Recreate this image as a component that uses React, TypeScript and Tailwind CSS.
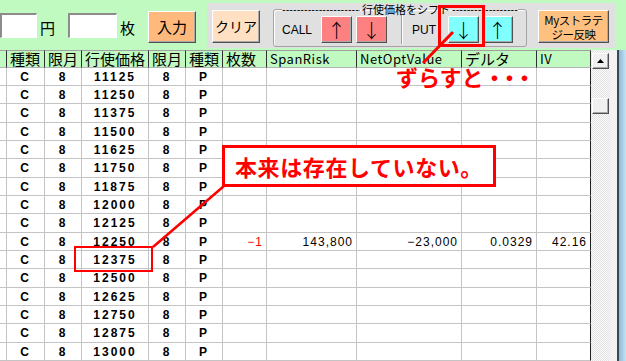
import React from "react";

const jp = "font-['Noto_Sans_CJK_JP',sans-serif]";
const lat = "font-['Liberation_Sans','Noto_Sans_CJK_JP',sans-serif]";
const raised =
  "border border-t-white border-l-white border-r-[#505050] border-b-[#505050] shadow-[inset_-1px_-1px_0_#a8a8a8]";
const sunken =
  "border-t-2 border-l-2 border-r border-b border-t-[#8c8c8c] border-l-[#8c8c8c] border-r-white border-b-white bg-white";
const cols =
  "grid grid-cols-[7px_38px_37px_67px_37px_37px_44px_90px_105px_75px_54px]";

const headers = ["", "種類", "限月", "行使価格", "限月", "種類", "枚数", "SpanRisk", "NetOptValue", "デルタ", "IV"];

const strikes = Array.from({ length: 17 }, (_, i) => 11125 + i * 125);

function ArrowBtn({ dir, color }: { dir: "up" | "down"; color: string }) {
  return (
    <div className={`flex h-[27px] w-[31px] items-center justify-center ${raised} ${color}`}>
      <span className="font-['Noto_Sans_CJK_JP',sans-serif] text-[19px] leading-none font-light">
        {dir === "up" ? "↑" : "↓"}
      </span>
    </div>
  );
}

function Row({ strike, i }: { strike: number; i: number }) {
  const h = i % 3 === 2 ? "h-[19px]" : "h-[18px]";
  const filled = strike === 12250;
  const cell = `${h} border-r border-b border-[#c4c4c4] flex items-center overflow-hidden whitespace-nowrap`;
  const bold = `${lat} text-[12px] font-bold tracking-[2px] justify-center`;
  const num = `${lat} text-[12px] tracking-[1px] justify-end pr-[3px]`;
  return (
    <div className={cols}>
      <div className={cell} />
      <div className={`${cell} ${bold}`}>C</div>
      <div className={`${cell} ${bold}`}>8</div>
      <div className={`${cell} ${bold}`}>{strike}</div>
      <div className={`${cell} ${bold}`}>8</div>
      <div className={`${cell} ${bold}`}>P</div>
      <div className={`${cell} ${num} text-[#ff0000]`}>{filled ? "−1" : ""}</div>
      <div className={`${cell} ${num}`}>{filled ? "143,800" : ""}</div>
      <div className={`${cell} ${num}`}>{filled ? "−23,000" : ""}</div>
      <div className={`${cell} ${num}`}>{filled ? "0.0329" : ""}</div>
      <div className={`${cell} ${num} border-r-[#202020]`}>{filled ? "42.16" : ""}</div>
    </div>
  );
}

export default function App() {
  return (
    <div className="relative h-[361px] w-[626px] overflow-hidden bg-white text-black">
      {/* top bar */}
      <div className="flex h-[50px] items-start bg-[#c1fac1]">
        <div className={`mt-[13px] h-[25px] w-[37px] ${sunken}`} />
        <span className={`ml-[3px] mt-[18px] w-[16px] text-[15px] leading-[20px] ${jp}`}>円</span>
        <div className={`ml-[12px] mt-[13px] h-[25px] w-[49px] ${sunken}`} />
        <span className={`ml-[3px] mt-[18px] w-[16px] text-[15px] leading-[20px] ${jp}`}>枚</span>
        <div
          className={`ml-[12px] mt-[11px] flex h-[32px] w-[48px] items-center justify-center bg-[#ffb97c] text-[15px] ${jp} ${raised}`}
        >
          入力
        </div>
        <div className="ml-[11px] mt-[3px] flex h-[45px] w-[408px] items-start bg-[#e0e0e0]">
          <div
            className={`ml-[5px] mt-[7px] flex h-[33px] w-[48px] items-center justify-center bg-[#ffe0c2] text-[14px] ${jp} ${raised}`}
          >
            クリア
          </div>
          <fieldset className="ml-[13px] h-[44px] w-[254px] rounded-[3px] border border-[#a4a4a4] px-[8px] shadow-[inset_1px_1px_0_#fff]">
            <legend className="flex h-[12px] w-[236px] items-center p-0">
              <span className={`w-[78px] shrink-0 overflow-hidden whitespace-nowrap text-[11px] leading-[12px] ${lat}`}>
                ------------------------------
              </span>
              <span className={`shrink-0 whitespace-nowrap px-[2px] text-[11px] leading-[12px] ${jp}`}>
                行使価格をシフト
              </span>
              <span className={`min-w-0 flex-1 overflow-hidden whitespace-nowrap text-[11px] leading-[12px] ${lat}`}>
                ------------------------------
              </span>
            </legend>
            <div className="mt-[1px] flex h-[27px] items-center">
              <span className={`w-[39px] text-[12px] ${lat}`}>CALL</span>
              <ArrowBtn dir="up" color="bg-[#ff8080]" />
              <div className="ml-[4px]">
                <ArrowBtn dir="down" color="bg-[#ff8080]" />
              </div>
              <div className="ml-[14px] h-[29px] w-[2px] border-l border-r border-l-[#a0a0a0] border-r-white" />
              <span className={`ml-[9px] w-[36px] text-[12px] ${lat}`}>PUT</span>
              <ArrowBtn dir="down" color="bg-[#80ffff]" />
              <div className="ml-[3px]">
                <ArrowBtn dir="up" color="bg-[#80ffff]" />
              </div>
            </div>
          </fieldset>
          <div
            className={`ml-[11px] mt-[7px] flex h-[33px] w-[71px] flex-col items-center justify-center whitespace-nowrap bg-[#ffc080] text-[11.5px] leading-[14px] tracking-[-0.5px] ${jp} ${raised}`}
          >
            <span>Myストラテ</span>
            <span>ジー反映</span>
          </div>
        </div>
      </div>

      {/* table area */}
      <div className="flex h-[311px]">
        <div className="w-[591px] overflow-hidden">
          <div className={cols}>
            {headers.map((t, i) => (
              <div
                key={i}
                className={`flex h-[18px] items-center overflow-hidden whitespace-nowrap border-t border-b border-r border-t-[#a0a0a0] border-b-[#b4b4b4] border-r-[#303030] bg-[#c1fac1] pl-[3px] ${jp} ${
                  /[A-Za-z]/.test(t) ? "text-[13px] tracking-[0.5px]" : "text-[15px]"
                } leading-[16px]`}
              >
                {t}
              </div>
            ))}
          </div>
          {strikes.map((s, i) => (
            <Row key={s} strike={s} i={i} />
          ))}
        </div>
        <div className="w-[19px] bg-[repeating-conic-gradient(#e2e2e2_0%_25%,#fbfbfb_0%_50%)] bg-[length:2px_2px] px-[1px] pt-[3px]">
          <div className={`flex h-[16px] w-[17px] items-center justify-center bg-[#f0f0f0] ${raised}`}>
            <svg width="7" height="4" viewBox="0 0 7 4">
              <polygon points="3.5,0 7,4 0,4" fill="#000" />
            </svg>
          </div>
          <div className={`mt-[29px] h-[16px] w-[17px] bg-[#f0f0f0] ${raised}`} />
        </div>
        <div className="w-[7px] bg-[#f2f2f2]" />
        <div className="w-[2px] bg-[#3b4856]" />
        <div className="w-[7px] bg-[linear-gradient(90deg,#8fb8d8,#c4e4f4)]" />
      </div>

      {/* annotations */}
      <svg className="pointer-events-none absolute left-0 top-0" width="626" height="361">
        <line x1="453" y1="32" x2="423" y2="63" stroke="#ff0000" strokeWidth="3" />
        <line x1="153" y1="247" x2="224" y2="186" stroke="#ff0000" strokeWidth="2.5" />
      </svg>
      <div className="absolute left-[438px] top-[5px] h-[42px] w-[47px] border-[3px] border-[#ff0000]" />
      <div className={`absolute left-[396px] top-[62px] text-[22px] leading-[28px] font-bold text-[#ff0000] ${jp}`}>
        ずらすと<span className="tracking-[-7px]">・・・</span>
      </div>
      <div
        className={`absolute left-[222px] top-[145px] flex h-[42px] w-[274px] items-center justify-center border-[3px] border-[#ff0000] bg-white text-[22px] font-bold tracking-[0.6px] text-[#ff0000] ${jp}`}
      >
        本来は存在していない。
      </div>
      <div className="absolute left-[74px] top-[246px] h-[26px] w-[79px] border-2 border-[#ff0000]" />
    </div>
  );
}
